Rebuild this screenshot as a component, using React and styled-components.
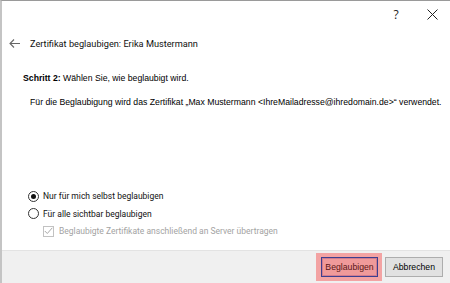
import React from "react";
import styled, { createGlobalStyle } from "styled-components";

const Global = createGlobalStyle`
  html, body { margin: 0; padding: 0; background: #fff; }
  * { box-sizing: border-box; }
`;

const Window = styled.div`
  width: 450px;
  height: 283px;
  display: flex;
  flex-direction: column;
  background: #fff;
  border-top: 1px solid #9a9a9a;
  border-left: 2px solid #c4c4c4;
  overflow: hidden;
`;

const TitleBar = styled.div`
  height: 27px;
  display: flex;
  justify-content: flex-end;
  align-items: center;
`;

const CaptionButton = styled.div`
  width: 36px;
  height: 27px;
  display: flex;
  align-items: center;
  justify-content: center;
  font-family: "Open Sans", "Liberation Sans", sans-serif;
  font-size: 12px;
  color: #222;
`;

const Header = styled.div`
  height: 30px;
  display: flex;
  align-items: center;
  padding-left: 7px;
`;

const Back = styled.div`
  width: 21px;
  display: flex;
  align-items: center;
`;

const HeaderTitle = styled.div`
  font-family: Roboto, "Liberation Sans", sans-serif;
  font-size: 9.2px;
  color: #111;
`;

const Content = styled.div`
  flex: 1;
  display: flex;
  flex-direction: column;
  padding: 13px 0 10px 21px;
`;

const Step = styled.div`
  font-family: "Liberation Sans", Arial, sans-serif;
  font-size: 8.7px;
  line-height: 14px;
  color: #000;
  b { font-weight: bold; }
`;

const Description = styled.div`
  font-family: "Liberation Sans", Arial, sans-serif;
  font-size: 8.7px;
  line-height: 14px;
  color: #000;
  margin-top: 10px;
  padding-left: 7px;
  white-space: nowrap;
`;

const Options = styled.div`
  margin-top: auto;
  display: flex;
  flex-direction: column;
  padding-left: 5px;
`;

const OptionRow = styled.div`
  height: 17.5px;
  display: flex;
  align-items: center;
  padding-left: ${(p) => p.$indent || 0}px;
  font-family: Roboto, "Liberation Sans", sans-serif;
  font-size: 8.5px;
  color: ${(p) => (p.$disabled ? "#a3a3a3" : "#111")};
`;

const Radio = styled.span`
  width: 11px;
  height: 11px;
  border-radius: 50%;
  border: 1px solid #333;
  display: flex;
  align-items: center;
  justify-content: center;
  margin-right: 4px;
  &::after {
    content: "";
    width: 5px;
    height: 5px;
    border-radius: 50%;
    background: ${(p) => (p.$checked ? "#111" : "transparent")};
  }
`;

const Check = styled.span`
  width: 11px;
  height: 11px;
  border: 1px solid #c2c2c2;
  display: flex;
  align-items: center;
  justify-content: center;
  margin-right: 5px;
`;

const Footer = styled.div`
  height: 33px;
  background: #f0f0f0;
  border-top: 1px solid #e3e3e3;
  display: flex;
  justify-content: flex-end;
  align-items: center;
  padding-right: 7px;
  gap: 3px;
`;

const Highlight = styled.div`
  background: #f3a3a3;
  padding: 4px 4px 4px 5px;
  display: flex;
`;

const Button = styled.div`
  height: 20px;
  width: ${(p) => p.$w}px;
  display: flex;
  align-items: center;
  justify-content: center;
  font-family: "Liberation Sans", Arial, sans-serif;
  font-size: 8.7px;
  color: ${(p) => (p.$primary ? "#5b1515" : "#000")};
  background: ${(p) => (p.$primary ? "#f09a9a" : "#e1e1e1")};
  border: 1px solid ${(p) => (p.$primary ? "#3d3f8f" : "#adadad")};
  box-shadow: ${(p) => (p.$primary ? "inset 0 0 0 1px #d07c90" : "none")};
`;

export default function App() {
  return (
    <>
      <Global />
      <Window>
        <TitleBar>
          <CaptionButton>?</CaptionButton>
          <CaptionButton>
            <svg width="11" height="11" viewBox="0 0 11 11">
              <path d="M0.5 0.5 L10.5 10.5 M10.5 0.5 L0.5 10.5" stroke="#222" strokeWidth="1" />
            </svg>
          </CaptionButton>
        </TitleBar>
        <Header>
          <Back>
            <svg width="11" height="9" viewBox="0 0 11 9">
              <path d="M5 0.5 L1 4.5 L5 8.5 M1 4.5 L11 4.5" stroke="#666" strokeWidth="1.1" fill="none" />
            </svg>
          </Back>
          <HeaderTitle>Zertifikat beglaubigen: Erika Mustermann</HeaderTitle>
        </Header>
        <Content>
          <Step>
            <b>Schritt 2:</b> Wählen Sie, wie beglaubigt wird.
          </Step>
          <Description>
            Für die Beglaubigung wird das Zertifikat „Max Mustermann &lt;IhreMailadresse@ihredomain.de&gt;“ verwendet.
          </Description>
          <Options>
            <OptionRow>
              <Radio $checked />
              Nur für mich selbst beglaubigen
            </OptionRow>
            <OptionRow>
              <Radio />
              Für alle sichtbar beglaubigen
            </OptionRow>
            <OptionRow $indent={15} $disabled>
              <Check>
                <svg width="9" height="8" viewBox="0 0 9 8">
                  <path d="M0.8 4 L3.3 6.5 L8.3 0.8" stroke="#a8a8a8" strokeWidth="1" fill="none" />
                </svg>
              </Check>
              Beglaubigte Zertifikate anschließend an Server übertragen
            </OptionRow>
          </Options>
        </Content>
        <Footer>
          <Highlight>
            <Button $primary $w={57}>Beglaubigen</Button>
          </Highlight>
          <Button $w={58}>Abbrechen</Button>
        </Footer>
      </Window>
    </>
  );
}
